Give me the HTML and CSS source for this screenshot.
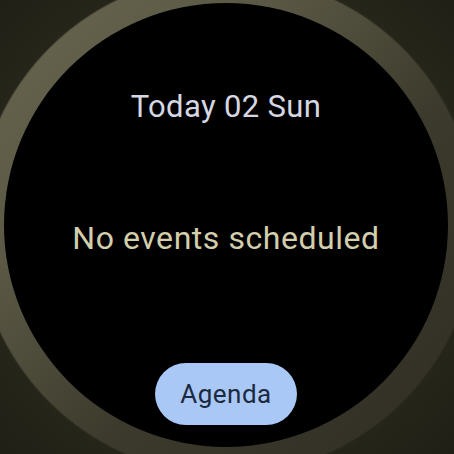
FILE: index.html
```html
<!DOCTYPE html>
<html lang="en">
<head>
<meta charset="utf-8">
<title>Agenda</title>
<link rel="stylesheet" href="styles.css">
</head>
<body>
<div class="screen">
  <div class="face">
    <div class="title">Today 02 Sun</div>
    <div class="empty">No events scheduled</div>
    <button class="agenda-btn">Agenda</button>
  </div>
</div>
</body>
</html>
```

FILE: styles.css
```css
html, body {
  margin: 0;
  padding: 0;
  background: #222119;
}
.screen {
  width: 454px;
  height: 454px;
  overflow: hidden;
  display: flex;
  align-items: center;
  justify-content: center;
  background:
    radial-gradient(circle at 226px 225px, transparent 249px, #262519 251px, #1f1e16 340px),
    linear-gradient(135deg, #686550 0%, #5a5844 30%, #3c3a2c 60%, #302e24 100%);
  font-family: Roboto, "Noto Sans", sans-serif;
}
.face {
  width: 444px;
  height: 444px;
  border-radius: 50%;
  background: #000;
  margin: -4px 0 0 -2px;
  display: flex;
  flex-direction: column;
  align-items: center;
  box-sizing: border-box;
  padding-top: 86px;
}
.title {
  font-size: 31px;
  line-height: 36px;
  letter-spacing: 0.35px;
  color: #d5d8e2;
}
.empty {
  margin-top: 94px;
  font-size: 32px;
  line-height: 38px;
  letter-spacing: 0.55px;
  color: #d3ceac;
}
.agenda-btn {
  margin-top: 106px;
  width: 142px;
  height: 62px;
  border: none;
  border-radius: 31px;
  background: #a9c8f6;
  color: #1c2a3e;
  font-family: Roboto, "Noto Sans", sans-serif;
  font-size: 26px;
  letter-spacing: 0.5px;
  padding: 0;
  display: flex;
  align-items: center;
  justify-content: center;
}
```
